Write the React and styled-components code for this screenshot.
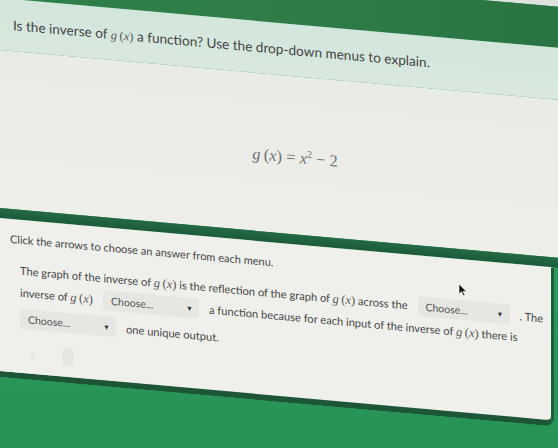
import styled, { createGlobalStyle } from "styled-components";

const GlobalStyle = createGlobalStyle`
  html, body {
    margin: 0;
    padding: 0;
    width: 558px;
    height: 448px;
    overflow: hidden;
    background: linear-gradient(180deg, #2a8f55 0%, #2b9a5b 60%, #289257 100%);
  }
`;

const Frame = styled.div`
  width: 558px;
  margin-top: -60px;
  transform: skewY(5.1deg);
  transform-origin: 0 0;
  font-family: Lato, "Liberation Sans", sans-serif;
`;

const TopStrip = styled.div`
  height: 17px;
  background: #dfe3df;
`;

const GreenBand = styled.div`
  height: 41px;
  background: linear-gradient(90deg, #2c8149 0%, #2f7c49 50%, #2a7444 100%);
`;

const QuestionBand = styled.div`
  height: 52px;
  display: flex;
  align-items: center;
  padding-left: 13px;
  background: linear-gradient(180deg, #d3e6dc 0%, #d8e8df 100%);
  color: #454545;
  font-size: 13.6px;
`;

const Intro = styled.div`
  height: 158px;
  display: flex;
  justify-content: center;
  padding: 71px 0 0 32px;
  box-sizing: border-box;
  background: linear-gradient(180deg, #e9ebe7 0%, #eeeeea 100%);
`;

const Equation = styled.div`
  font-family: "Liberation Serif", "DejaVu Serif", serif;
  font-size: 16.5px;
  color: #707070;
  height: 20px;
`;

const Stripe = styled.div`
  height: 10px;
  background: linear-gradient(180deg, #236a45 0%, #1c5a3a 100%);
`;

const Panel = styled.div`
  position: relative;
  width: 554px;
  height: 159px;
  box-sizing: border-box;
  padding: 13px 0 0 10px;
  background: #efefeb;
  border-bottom: 6px solid #1c5636;
  border-right: 3px solid #1f5c3a;
  border-bottom-right-radius: 9px;
  color: #474747;
`;

const Instruction = styled.div`
  font-size: 11px;
  line-height: 14px;
`;

const Paragraph = styled.div`
  display: flex;
  flex-direction: column;
  margin-top: 14px;
  padding-left: 10px;
  font-size: 11.1px;
`;

const Line = styled.div`
  display: flex;
  align-items: center;
  height: 20px;
  margin-top: ${(p) => p.$mt || 0}px;
  gap: 10px;
  white-space: nowrap;
`;

const Math = styled.span`
  font-family: "Liberation Serif", "DejaVu Serif", serif;
  font-size: 12.5px;
  color: #555;
  i {
    font-style: italic;
  }
`;

const Select = styled.div`
  display: flex;
  align-items: center;
  justify-content: space-between;
  width: ${(p) => p.$w || 92}px;
  height: 20px;
  padding: 0 6px 0 8px;
  box-sizing: border-box;
  background: #e6e6e2;
  border-radius: 3px;
  color: #555;
  font-size: 10.5px;
`;

const Caret = styled.span`
  font-size: 7px;
  color: #333;
`;

const Cursor = styled.svg`
  position: absolute;
  left: 458px;
  top: 24px;
`;

const Ghosts = styled.div`
  display: flex;
  align-items: center;
  gap: 26px;
  margin: 14px 0 0 18px;
`;

const GhostPlus = styled.span`
  font-size: 14px;
  color: #e0e0dc;
`;

const GhostOval = styled.span`
  width: 12px;
  height: 20px;
  border-radius: 6px;
  background: #e6e6e2;
`;

const G = () => (
  <Math>
    <i>g</i>&thinsp;(<i>x</i>)
  </Math>
);

const Choose = ({ w }) => (
  <Select $w={w}>
    Choose...
    <Caret>▼</Caret>
  </Select>
);

export default function App() {
  return (
    <>
      <GlobalStyle />
      <Frame>
        <TopStrip />
        <GreenBand />
        <QuestionBand>
          <span>
            Is the inverse of <G /> a function? Use the drop-down menus to explain.
          </span>
        </QuestionBand>
        <Intro>
          <Equation>
            <i>g</i>&thinsp;(<i>x</i>) = <i>x</i>
            <sup style={{ fontSize: "10px" }}>2</sup> − 2
          </Equation>
        </Intro>
        <Stripe />
        <Panel>
          <Instruction>Click the arrows to choose an answer from each menu.</Instruction>
          <Paragraph>
            <Line>
              <span>
                The graph of the inverse of <G /> is the reflection of the graph of <G /> across the
              </span>
              <Choose w={92} />
              <span>. The</span>
            </Line>
            <Line $mt={2}>
              <span>
                inverse of <G />
              </span>
              <Choose w={96} />
              <span>
                a function because for each input of the inverse of <G /> there is
              </span>
            </Line>
            <Line $mt={6}>
              <Choose w={96} />
              <span>one unique output.</span>
            </Line>
          </Paragraph>
          <Ghosts>
            <GhostPlus>+</GhostPlus>
            <GhostOval />
          </Ghosts>
          <Cursor width="9" height="13" viewBox="0 0 9 13">
            <path d="M1 1 L1 11 L3.5 8.5 L5.5 12.5 L7 11.8 L5 8 L8.5 8 Z" fill="#111" stroke="#fff" strokeWidth="0.6" />
          </Cursor>
        </Panel>
      </Frame>
    </>
  );
}
